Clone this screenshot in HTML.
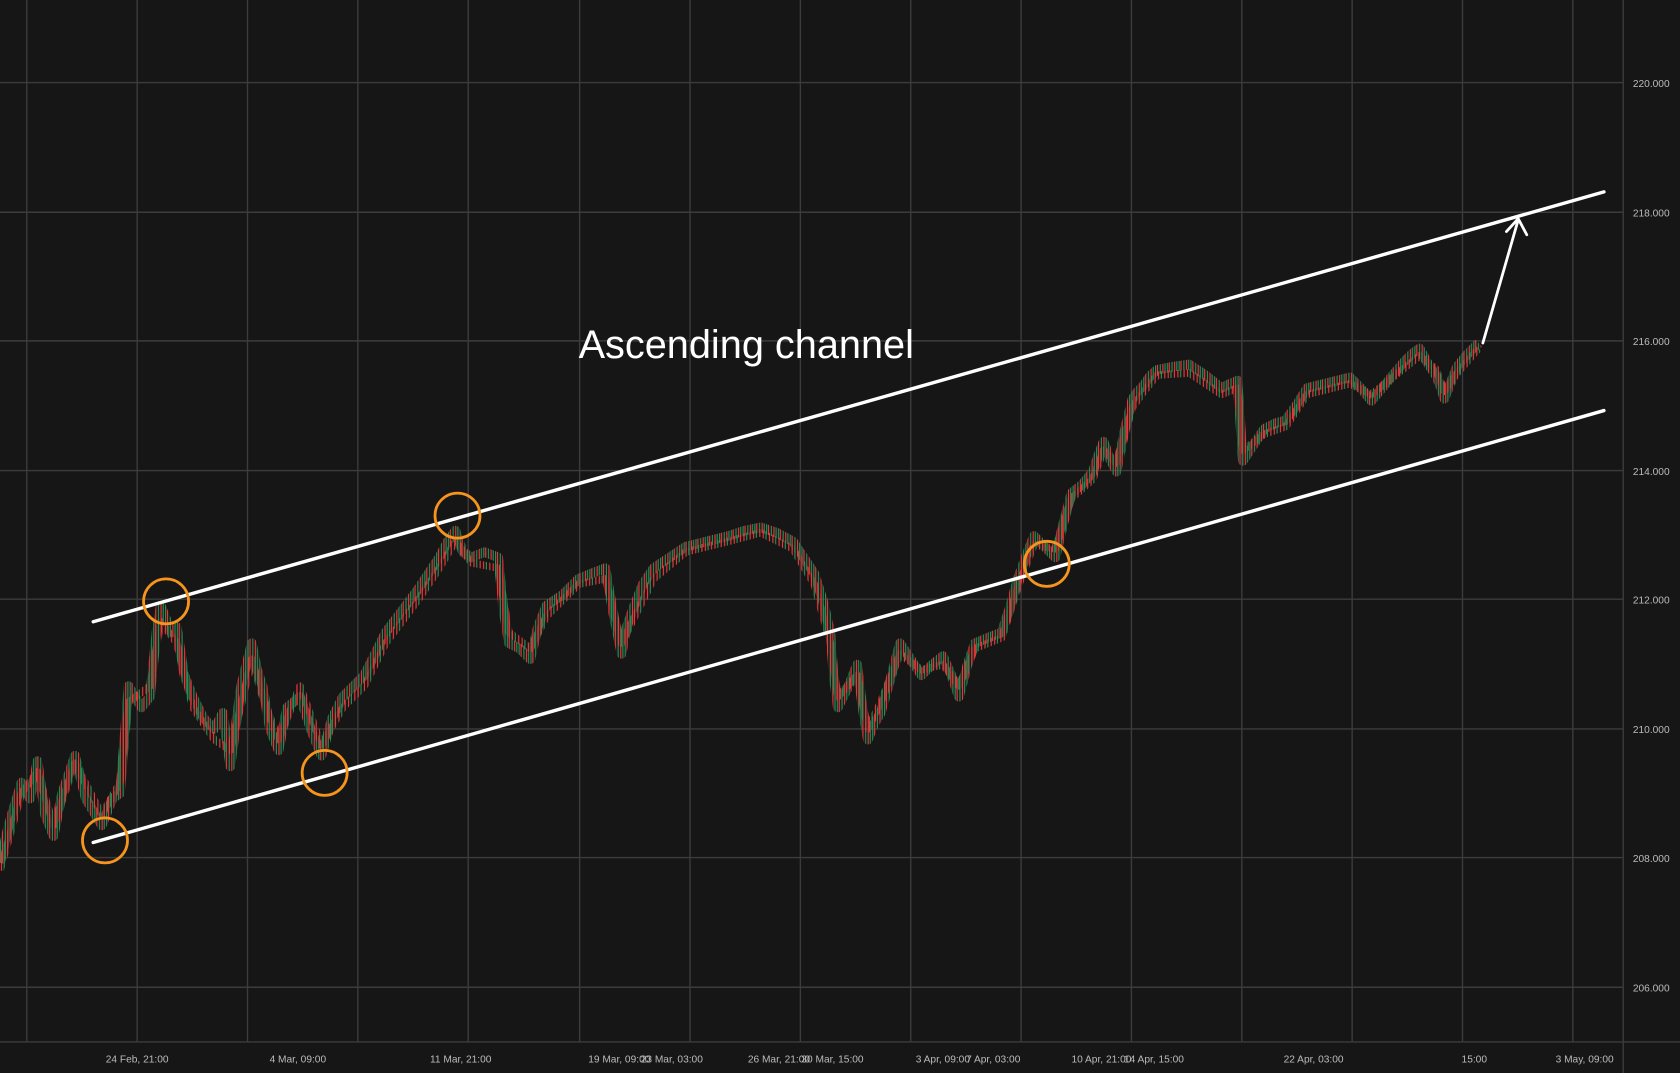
<!DOCTYPE html>
<html><head><meta charset="utf-8"><style>
html,body{margin:0;padding:0;background:#161616;overflow:hidden}
svg{display:block}
text{font-family:"Liberation Sans",sans-serif}
</style></head><body>
<svg width="1680" height="1073" viewBox="0 0 1568 1001" preserveAspectRatio="none" xmlns="http://www.w3.org/2000/svg">
<defs>
<pattern id="cp" patternUnits="userSpaceOnUse" x="0" y="0" width="11" height="6">
<rect x="0" y="0" width="1.1" height="6" fill="#2e8b57"/>
<rect x="1.8" y="0" width="1.1" height="6" fill="#e83a3a"/>
<rect x="4.4" y="0" width="1.1" height="6" fill="#2e8b57"/>
<rect x="6.8" y="0" width="1.1" height="6" fill="#e83a3a"/>
<rect x="8.8" y="0" width="1.1" height="6" fill="#2e8b57"/>
</pattern>
<pattern id="cp2" patternUnits="userSpaceOnUse" x="0" y="0" width="9" height="5">
<rect x="0.8" y="0" width="1.1" height="5" fill="#e83a3a"/>
<rect x="3.4" y="0" width="1.1" height="5" fill="#2e8b57"/>
<rect x="6.6" y="0" width="1.1" height="5" fill="#e83a3a"/>
</pattern>
</defs>
<rect width="1568" height="1001" fill="#161616"/>
<g stroke="#3c3c3c" stroke-width="1.3">
<line x1="25" y1="0" x2="25" y2="972"/><line x1="128" y1="0" x2="128" y2="972"/><line x1="231" y1="0" x2="231" y2="972"/><line x1="334" y1="0" x2="334" y2="972"/><line x1="437" y1="0" x2="437" y2="972"/><line x1="541" y1="0" x2="541" y2="972"/><line x1="644" y1="0" x2="644" y2="972"/><line x1="747" y1="0" x2="747" y2="972"/><line x1="850" y1="0" x2="850" y2="972"/><line x1="953" y1="0" x2="953" y2="972"/><line x1="1056" y1="0" x2="1056" y2="972"/><line x1="1159" y1="0" x2="1159" y2="972"/><line x1="1262" y1="0" x2="1262" y2="972"/><line x1="1365" y1="0" x2="1365" y2="972"/><line x1="1468" y1="0" x2="1468" y2="972"/>
<line x1="1515" y1="0" x2="1515" y2="1001"/>
<line x1="0" y1="77" x2="1515" y2="77"/><line x1="0" y1="198" x2="1515" y2="198"/><line x1="0" y1="318" x2="1515" y2="318"/><line x1="0" y1="439" x2="1515" y2="439"/><line x1="0" y1="559" x2="1515" y2="559"/><line x1="0" y1="680" x2="1515" y2="680"/><line x1="0" y1="800" x2="1515" y2="800"/><line x1="0" y1="921" x2="1515" y2="921"/>
<line x1="0" y1="972" x2="1568" y2="972"/>
</g>
<g fill="#bbbbbb" font-size="9.5">
<text x="1524" y="81">220.000</text><text x="1524" y="202">218.000</text><text x="1524" y="322">216.000</text><text x="1524" y="443">214.000</text><text x="1524" y="563">212.000</text><text x="1524" y="684">210.000</text><text x="1524" y="804">208.000</text><text x="1524" y="925">206.000</text>
</g>
<g fill="#bbbbbb" font-size="9.5" text-anchor="middle">
<text x="128" y="991">24 Feb, 21:00</text><text x="278" y="991">4 Mar, 09:00</text><text x="430" y="991">11 Mar, 21:00</text><text x="578" y="991">19 Mar, 09:00</text><text x="627" y="991">23 Mar, 03:00</text><text x="727" y="991">26 Mar, 21:00</text><text x="777" y="991">30 Mar, 15:00</text><text x="880" y="991">3 Apr, 09:00</text><text x="927" y="991">7 Apr, 03:00</text><text x="1028" y="991">10 Apr, 21:00</text><text x="1077" y="991">14 Apr, 15:00</text><text x="1226" y="991">22 Apr, 03:00</text><text x="1376" y="991">15:00</text><text x="1479" y="991">3 May, 09:00</text>
</g>
<g fill="none" stroke-linejoin="round">
<polyline stroke="url(#cp)" stroke-width="9" points="0,805 8,770 20,730 28,745 35,710 42,760 50,780 58,740 70,705 80,745 95,770 105,745 112,740 116,690 120,640 132,660 140,650 146,590 150,565 160,590 165,585 172,630 180,650 190,670 200,680 208,665 215,715 225,640 235,600 240,625 245,640 252,680 260,700 268,660 280,650 290,680 300,705 310,670 320,650 330,640 340,630 350,610 360,590 375,570 390,550 400,535 410,520 418,505 425,495 432,515 440,520 452,515 465,520 470,570 475,600 485,605 495,615 502,585 510,565 525,555 540,540 552,535 565,530 572,570 580,610 585,585 590,570 600,545 610,530 625,520 640,510 660,505 680,500 695,495 710,492 725,497 740,505 750,520 760,535 768,560 775,590 778,630 782,660 792,640 800,620 805,660 810,690 816,675 822,665 832,630 840,600 850,615 860,630 870,620 880,612 888,630 895,650 903,620 910,600 922,595 935,590 943,565 950,540 958,518 965,500 975,510 985,520 992,490 1000,460 1010,452 1020,440 1025,425 1030,412 1036,428 1042,440 1050,400 1057,372 1062,365 1067,360 1074,350 1080,345 1095,342 1110,340 1125,350 1140,362 1148,358 1155,355 1158,400 1160,430 1170,415 1180,400 1190,395 1200,392 1210,378 1220,362 1240,357 1260,352 1270,362 1280,374 1295,356 1310,338 1318,330 1325,325 1332,338 1340,350 1345,362 1348,372 1354,357 1360,342 1370,330 1380,320"/>
<polyline stroke="url(#cp2)" stroke-width="7" points="0,812 20,740 35,720 50,770 70,712 95,760 112,730 120,655 140,640 150,580 165,600 180,660 200,690 215,700 235,615 245,650 260,690 280,640 300,695 320,660 340,640 360,600 390,560 410,530 425,505 440,525 465,530 475,590 495,605 510,575 540,545 565,540 580,600 590,580 610,540 640,515 680,505 710,497 740,512 760,545 775,600 782,650 800,630 810,680 822,655 840,610 860,625 880,620 895,640 910,605 935,595 950,548 965,508 985,512 1000,465 1020,447 1030,420 1042,432 1057,380 1067,366 1080,350 1110,348 1140,368 1155,362 1160,420 1180,405 1200,398 1220,368 1260,358 1280,368 1310,344 1325,332 1340,344 1348,365 1360,348 1380,325"/>
</g>
<g stroke="#ffffff" stroke-width="3.2" stroke-linecap="round" fill="none">
<line x1="87" y1="580" x2="1497" y2="179"/>
<line x1="87" y1="786" x2="1497" y2="383"/>
<line x1="1384" y1="320" x2="1417" y2="205" stroke-width="2.6"/>
<polyline points="1406,216 1417,204 1425,219" stroke-width="2.6"/>
</g>
<g stroke="#f7941d" stroke-width="2.6" fill="none">
<circle cx="98" cy="784" r="21"/><circle cx="155" cy="561" r="21"/><circle cx="303" cy="721" r="21"/><circle cx="427" cy="481" r="21"/><circle cx="977" cy="526" r="21"/>
</g>
<text x="540" y="334" fill="#ffffff" font-size="37" textLength="313" lengthAdjust="spacingAndGlyphs">Ascending channel</text>
</svg>
</body></html>
